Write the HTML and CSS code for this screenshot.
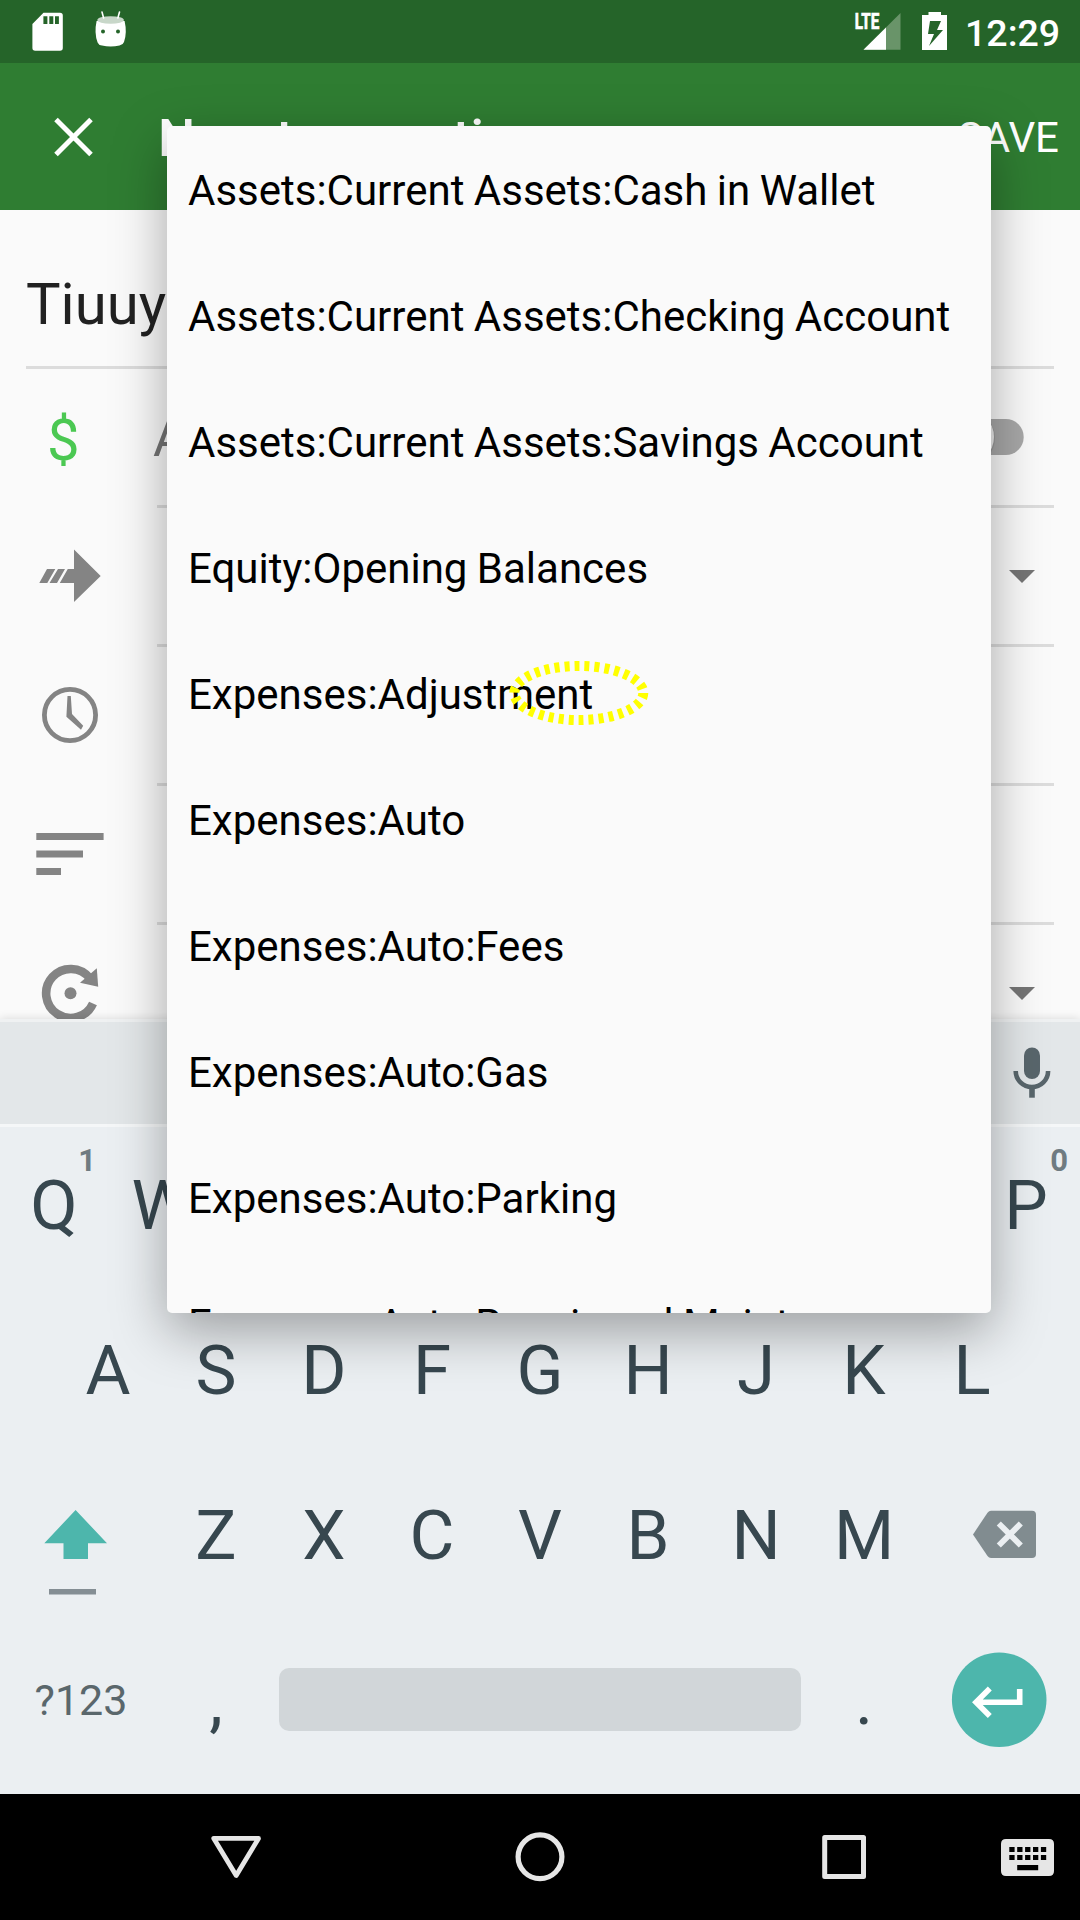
FILE: index.html
```html
<!DOCTYPE html>
<html lang="en">
<head>
<meta charset="utf-8">
<title>New transaction</title>
<link rel="stylesheet" href="styles.css">
</head>
<body>
<div class="screen">
  <header class="status-bar">
    <svg class="status-left" viewBox="0 0 160 63">
      <path fill="#fff" fill-rule="evenodd" d="M43.5 12.7H60q2.8 0 2.8 2.8V48q0 2.8-2.8 2.8H35.2q-2.8 0-2.8-2.8V24zM43.4 16.3v7.7h4v-7.7zM49.3 16.3v7.7h4v-7.7zM55 16.3v7.7h3.9v-7.7z"/>
      <path fill="#fff" d="M96.6 21Q94 33 97.6 42.5 98.500 45 102 45.600 110.500 47.600 119.500 45.600 123 45 124 42 127.300 33 124.600 21z"/>
      <ellipse cx="110.600" cy="20" rx="13.300" ry="3.800" fill="#c8d7c9"/>
      <path stroke="#fff" stroke-width="1.600" stroke-linecap="round" d="M102 12l1.600 6M119.500 12l-1.600 6"/>
      <circle cx="103" cy="31.500" r="2" fill="#256429"/><circle cx="118" cy="31.500" r="2" fill="#256429"/>
    </svg>
    <div class="status-right">
      <svg class="status-signal" viewBox="850 0 110 63">
        <path fill="#699469" d="M900.500 13v36.700h-37z"/>
        <path fill="#fff" d="M886 27.500v22.200h-22.500z"/>
        <path fill="#256429" d="M850 10h30v19.500h-30z"/>
        <text class="lte" x="854.800" y="28.700" textLength="24.500" lengthAdjust="spacingAndGlyphs">LTE</text>
        <path fill="#fff" fill-rule="evenodd" d="M928.500 12H941v3h6v35h-25V15h6.500zM930 21l-2 13h6l-5 12 14-16h-6l4-9z"/>
      </svg>
      <span class="clock">12:29</span>
    </div>
  </header>

  <div class="toolbar">
    <svg class="close" viewBox="0 63 157 147"><path d="M56 119.500l35 35M91 119.500l-35 35" stroke="#fff" stroke-width="5"/></svg>
    <h1 class="title">New transaction</h1>
    <span class="save">SAVE</span>
  </div>

  <main class="form">
    <div class="description">Tiuuy</div>
    <div class="row">
      <span class="currency">$</span>
      <div class="field"><span class="hint">Amount</span>
        <svg class="switch" viewBox="934 405 120 64"><rect x="940" y="419" width="83.700" height="36" rx="18" fill="#a8a8a8"/><circle cx="966" cy="438" r="29" fill="#888" opacity=".5"/><circle cx="966" cy="437" r="28" fill="#ececec"/></svg>
      </div>
    </div>
    <div class="row">
      <svg class="icon" viewBox="0 508 157 139"><path fill="#848484" d="M74 549.500l26.700 26.500L74 602v-19H59.800l8-14H74zM47 569h8.300l-8 14h-8zM58 569h7l-8 14h-7.500z"/></svg>
      <div class="field"><i class="caret"></i></div>
    </div>
    <div class="row">
      <svg class="icon" viewBox="0 647 157 139"><circle cx="70" cy="715" r="25.600" fill="none" stroke="#848484" stroke-width="4.800"/><path fill="#848484" d="M67.500 696h3.300l1.200 18 11.200 11.800-2.200 4-14.600-13z"/></svg>
      <div class="field"></div>
    </div>
    <div class="row">
      <svg class="icon" viewBox="0 786 157 139"><path fill="#848484" d="M36.300 833h67.300v7H36.300zM36.300 850.500H83v7H36.300zM36.300 868H61v7H36.300z"/></svg>
      <div class="field"></div>
    </div>
    <div class="row">
      <svg class="icon" viewBox="0 925 157 139"><path fill="none" stroke="#848484" stroke-width="8.600" d="M89.800 978.200A24.500 24.500 0 1 0 93 1003.500"/><path fill="#848484" d="M96.800 968.300l1.400 18.500-18.200-4z"/><circle cx="70.500" cy="993.200" r="6" fill="#848484"/></svg>
      <div class="field"><i class="caret"></i></div>
    </div>
  </main>

  <section class="keyboard">
    <div class="suggestions">
      <svg class="mic" viewBox="1002 1022 60 102"><rect x="1024" y="1047.500" width="16" height="31.500" rx="8" fill="#59666c"/><path fill="none" stroke="#59666c" stroke-width="4.600" d="M1015.700 1071a16.200 16.200 0 0 0 32.400 0"/><path fill="#59666c" d="M1029.200 1088h5.600v9.700h-5.600z"/></svg>
    </div>
    <div class="keys keys-top">
      <span class="key">Q<sup>1</sup></span><span class="key">W</span><span class="key">E</span><span class="key">R</span><span class="key">T</span><span class="key">Y</span><span class="key">U</span><span class="key">I</span><span class="key">O</span><span class="key">P<sup>0</sup></span>
    </div>
    <div class="keys">
      <span class="key">A</span><span class="key">S</span><span class="key">D</span><span class="key">F</span><span class="key">G</span><span class="key">H</span><span class="key">J</span><span class="key">K</span><span class="key">L</span>
    </div>
    <div class="keys">
      <svg class="key-wide" viewBox="0 1453 162 165"><path fill="#4db6ac" d="M75.600 1510l31.400 33.300H88v15.700H63.500v-15.700H44.300z"/><path fill="#848e94" d="M49 1589h47v5.600H49z"/></svg>
      <span class="key">Z</span><span class="key">X</span><span class="key">C</span><span class="key">V</span><span class="key">B</span><span class="key">N</span><span class="key">M</span>
      <svg class="key-wide" viewBox="918 1453 162 165"><path fill="#818c90" d="M991 1510.800h41q4 0 4 4V1554q0 4-4 4h-41q-2 0-3.500-2L973 1534.400l14.500-21.600q1.500-2 3.500-2z"/><path stroke="#ebeff2" stroke-width="5.800" d="M998.800 1523.500l22 22M1020.800 1523.500l-22 22"/></svg>
    </div>
    <div class="keys">
      <span class="key-wide symbols">?123</span>
      <span class="key">,</span>
      <span class="space"></span>
      <span class="key">.</span>
      <svg class="key-wide" viewBox="918 1618 162 165"><circle cx="999.200" cy="1699.700" r="47.300" fill="#4db6ac"/><path fill="none" stroke="#fff" stroke-width="5.600" d="M1019.700 1689v13.200H977M989.800 1688.500L976 1702.200l13.800 13.800"/></svg>
    </div>
  </section>

  <nav class="nav-bar">
    <svg viewBox="0 1794 1080 126">
      <g fill="none" stroke="#e6e6e6" stroke-linejoin="round">
        <path stroke-width="4.800" d="M213.800 1838.400h44.700L236.200 1875.500z"/>
        <circle cx="540" cy="1856.800" r="21.900" stroke-width="5.200"/>
        <rect x="824.700" y="1837.500" width="38.800" height="39" stroke-width="5"/>
      </g>
      <path fill="#e6e6e6" fill-rule="evenodd" d="M1006 1839h43q5 0 5 5v27q0 5-5 5h-43q-5 0-5-5v-27q0-5 5-5zM1017.200 1865v5.300h21V1865z"/>
      <path stroke="#000" stroke-width="5" stroke-dasharray="5.300 2.600" d="M1009.300 1849.500h37.500M1009.300 1857.600h37.500"/>
    </svg>
  </nav>

  <div class="menu">
    <div class="option">Assets:Current Assets:Cash in Wallet</div>
    <div class="option">Assets:Current Assets:Checking Account</div>
    <div class="option">Assets:Current Assets:Savings Account</div>
    <div class="option">Equity:Opening Balances</div>
    <div class="option">Expenses:Adjustment</div>
    <div class="option">Expenses:Auto</div>
    <div class="option">Expenses:Auto:Fees</div>
    <div class="option">Expenses:Auto:Gas</div>
    <div class="option">Expenses:Auto:Parking</div>
    <div class="option">Expenses:Auto:Repair and Maintenance</div>
  </div>
  <svg class="marker" viewBox="500 655 160 76"><ellipse cx="578.800" cy="693" rx="64.500" ry="27" fill="none" stroke="#ff0" stroke-width="10" stroke-dasharray="5 5"/></svg>
</div>
</body>
</html>
```
FILE: styles.css
```css
* { box-sizing: border-box; }
body { margin: 0; font-family: Roboto, "Noto Sans", sans-serif; }
svg { display: block; flex: none; }
.screen {
  position: relative;
  display: flex;
  flex-direction: column;
  width: 1080px;
  height: 1920px;
  overflow: hidden;
  background: #fafafa;
}

.status-bar {
  display: flex;
  justify-content: space-between;
  height: 63px;
  background: #256429;
  color: #fff;
}
.status-left { width: 160px; height: 63px; }
.status-right { display: flex; width: 230px; }
.status-signal { width: 110px; height: 63px; }
.lte { font-size: 21.500px; font-weight: 700; fill: #fff; stroke: #fff; stroke-width: .7px; }
.clock { margin-left: 5px; padding-top: 2px; font-size: 37.500px; font-weight: 500; line-height: 63px; }

.toolbar {
  display: flex;
  height: 147px;
  padding-right: 21px;
  background: #2f7d32;
  color: #fff;
  line-height: 147px;
}
.close { width: 157px; height: 147px; }
.title { flex: 1; margin: 0; padding: 3px 0 0 1px; font-size: 52.500px; font-weight: 500; letter-spacing: .2px; line-height: 144px; }
.save { padding-top: 1px; font-size: 42px; }

.form { display: flex; flex-direction: column; height: 809px; overflow: hidden; }
.description {
  flex: none;
  height: 159px;
  margin: 0 26px;
  border-bottom: 3px solid #dcdcdc;
  color: #212121;
  font-size: 58px;
  line-height: 188px;
}
.row { display: flex; flex: none; height: 139px; }
.icon { width: 157px; height: 139px; }
.currency { width: 157px; padding-left: 47px; color: #4bc852; font-size: 58px; line-height: 142px; }
.field {
  display: flex;
  flex: 1;
  align-items: center;
  justify-content: flex-end;
  margin-right: 26px;
  border-bottom: 3px solid #dcdcdc;
}
.hint { flex: 1; margin-left: -4px; color: #757575; font-size: 52px; line-height: 136px; padding-top: 3px; }
.switch { width: 120px; height: 64px; }
.caret {
  margin-right: 19px;
  border: 13px solid transparent;
  border-top-color: #757575;
  border-bottom: 0;
}

.keyboard {
  height: 775px;
  border-top: 3px solid #eff1f2;
  background: #ebeff2;
  box-shadow: 0 0 9px rgba(0, 0, 0, .14);
  color: #37474f;
}
.suggestions {
  display: flex;
  justify-content: flex-end;
  height: 105px;
  padding-right: 18px;
  border-bottom: 3px solid #f5f7f8;
  background: #e3e7e9;
}
.mic { width: 60px; height: 102px; }
.keys { display: flex; justify-content: center; height: 165px; font-size: 69px; line-height: 165px; }
.keys-top { height: 161px; line-height: 157px; }
.key { position: relative; width: 108px; text-align: center; }
.key sup {
  position: absolute;
  top: 16px;
  right: 12px;
  color: #6f7b81;
  font-size: 31px;
  font-weight: 700;
  line-height: 36px;
}
.key-wide { width: 162px; height: 165px; text-align: center; }
.symbols { font-size: 43px; color: #5a676c; }
.space { width: 522px; height: 63px; margin: 50px 9px 0; border-radius: 10px; background: #d1d6d9; }

.nav-bar { height: 126px; background: #000; }

.menu {
  position: absolute;
  top: 126px;
  left: 167px;
  width: 824px;
  height: 1187px;
  overflow: hidden;
  border-radius: 5px;
  background: #fafafa;
  box-shadow: 0 18px 54px rgba(0, 0, 0, .34);
}
.option { height: 126px; padding: 2px 21px 0; color: #000; font-size: 42px; line-height: 126px; white-space: nowrap; word-spacing: -1px; }
.marker { position: absolute; top: 655px; left: 500px; width: 160px; height: 76px; }
```
